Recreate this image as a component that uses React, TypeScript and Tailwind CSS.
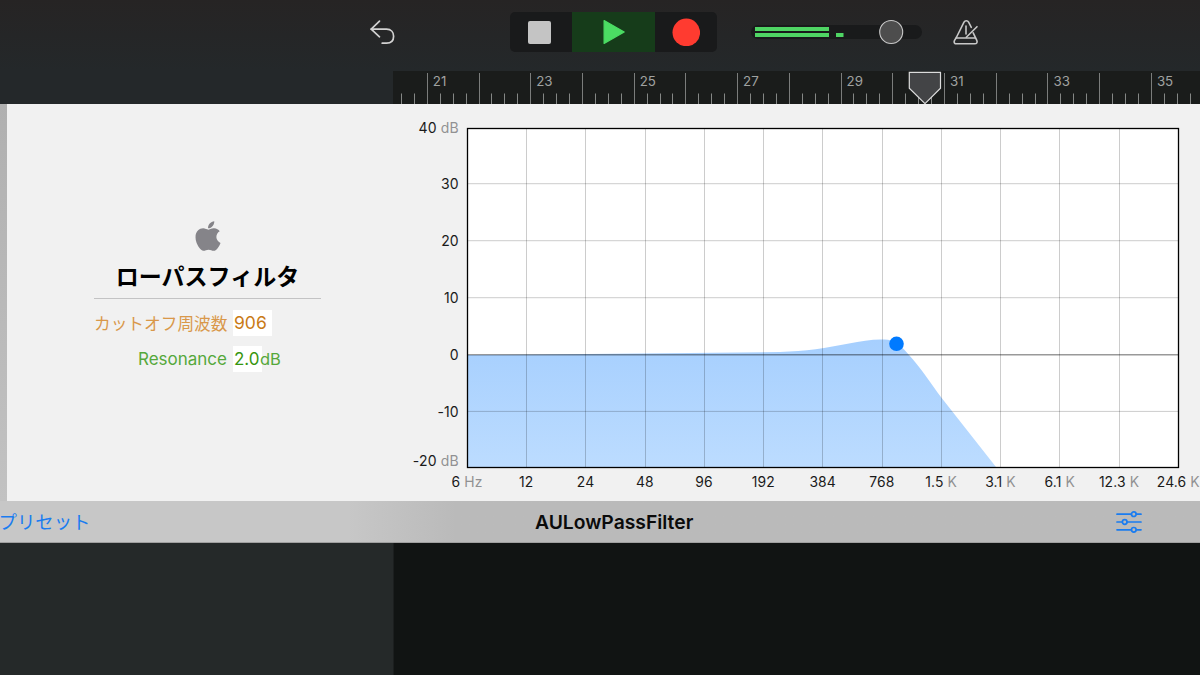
import { FaApple } from 'react-icons/fa'

const BAR_WIDTH = 51.72
const FIRST_BAR_X = 34.3

const FREQS = [
  { value: '6', unit: 'Hz' },
  { value: '12' },
  { value: '24' },
  { value: '48' },
  { value: '96' },
  { value: '192' },
  { value: '384' },
  { value: '768' },
  { value: '1.5', unit: 'K' },
  { value: '3.1', unit: 'K' },
  { value: '6.1', unit: 'K' },
  { value: '12.3', unit: 'K' },
  { value: '24.6', unit: 'K' },
]

const GAINS = [
  { value: '40', unit: 'dB', y: 23 },
  { value: '30', y: 79 },
  { value: '20', y: 136 },
  { value: '10', y: 193 },
  { value: '0', y: 250 },
  { value: '-10', y: 307 },
  { value: '-20', unit: 'dB', y: 356.6 },
]

const CURVE =
  'M74 251 L247 249.6 L387 248 C412 247.5 434 244 456 239.6 C470 236.5 484 234.5 495 235.8 C503 237 509 243 516 251 C528 264 538 280 548.5 293.8 L603 363'

function Header() {
  return (
    <header className="flex h-[71px] items-center bg-linear-to-b from-[#262424] via-[#252627] to-[#24282a] pb-[7px] pl-[369px]">
      <svg width="28" height="28" viewBox="0 0 28 28" fill="none" stroke="#d2d2d2" strokeWidth="1.7" strokeLinecap="round" strokeLinejoin="round">
        <path d="M10.5 3.2 L2.2 11.2 L10.5 18.8" />
        <path d="M2.2 11.2 H17.5 C22.2 11.2 24.6 14.4 24.6 18.3 C24.6 22.3 22.2 25.2 17.5 25.2 H13.2" />
      </svg>

      <div className="ml-[113px] flex h-10 w-[207px] overflow-hidden rounded-[5px] bg-[#191a1b]">
        <button className="flex w-[62px] items-center justify-center pr-[3px]">
          <span className="size-[23px] rounded-xs bg-[#c4c4c4]" />
        </button>
        <button className="flex w-[83px] items-center justify-center bg-[#163c1a]">
          <svg width="24" height="26" viewBox="0 0 24 26">
            <path d="M2.1 1.6 L22.2 13 L2.1 24.4 Z" fill="#4bdc63" stroke="#4bdc63" strokeWidth="1.2" strokeLinejoin="round" />
          </svg>
        </button>
        <button className="flex w-[62px] items-center justify-center">
          <svg width="28" height="28" viewBox="0 0 28 28">
            <circle cx="14.3" cy="14.4" r="13.8" fill="#ff3b30" />
          </svg>
        </button>
      </div>

      <svg className="ml-[34px]" width="172" height="28" viewBox="0 0 172 28">
        <rect x="0" y="7" width="171" height="14" rx="7" fill="#191a1b" />
        <rect x="4" y="9" width="74" height="4" fill="#4fd564" />
        <rect x="4" y="15" width="74" height="4" fill="#4fd564" />
        <rect x="85" y="15" width="7.5" height="4" fill="#4fd564" />
        <circle cx="140.2" cy="14" r="11.5" fill="#4d4d4d" stroke="#c8c8c8" strokeWidth="1.1" />
      </svg>

      <svg className="ml-[29px]" width="28" height="28" viewBox="0 0 28 28" fill="none" stroke="#c8c8c8" strokeWidth="1.6" strokeLinecap="round" strokeLinejoin="round">
        <path d="M19.3 9.4 L16.6 4.2 C15.6 2.3 13 2.3 12 4.2 L4.6 19 L2.4 22.6 C1.6 24.5 2.6 25.8 4.6 25.8 H22.6 C24.8 25.8 25.6 24.3 24.8 22.4 L21.2 14.8" />
        <path d="M4.4 20 H23.4" />
        <path d="M14 8 V16" />
        <path d="M14.3 19.3 L25 8.7" />
      </svg>
    </header>
  )
}

function Ruler() {
  const ticks = Array.from({ length: 62 }, (_, i) => i - 2)
  const labels = [21, 23, 25, 27, 29, 31, 33, 35]

  return (
    <div className="flex h-[33px] bg-[#24282a] pl-[393px]">
      <svg width="807" height="33" viewBox="0 0 807 33" className="bg-[#1a1c1b]">
        {ticks.map(i => (
          <rect
            key={i}
            x={Math.round(FIRST_BAR_X + (i * BAR_WIDTH) / 4 - 0.5)}
            y={i % 4 === 0 ? 2 : 22.5}
            width="1"
            height={i % 4 === 0 ? 31 : 10.5}
            fill={i % 4 === 0 ? '#7b7d7c' : '#858786'}
          />
        ))}
        {labels.map((n, i) => (
          <text key={n} x={FIRST_BAR_X + 5.5 + i * 2 * BAR_WIDTH} y="15.2" fontSize="13.3" fill="#a0a2a1">
            {n}
          </text>
        ))}
        {/* playhead */}
        <path d="M516.3 1.4 H547.5 V17.3 L532 32.6 L516.3 17.3 Z" fill="#434446" stroke="#dcdcdc" strokeWidth="1.2" />
      </svg>
    </div>
  )
}

function Info() {
  return (
    <section className="flex w-[386px] flex-col pl-[87px]">
      <div className="flex w-[227px] flex-col items-center border-b border-[#c3c3c4] pt-[115px]">
        <FaApple size={34} className="text-[#858489]" />
        <h1 className="mt-[9px] h-[36px] text-[23px] leading-[31px] font-bold whitespace-nowrap text-black">ローパスフィルタ</h1>
      </div>
      <div className="mt-[11px] flex h-[26px] items-center">
        <span className="w-[133px] pt-[3px] text-right text-[16.7px] whitespace-nowrap text-[#d9984a]">カットオフ周波数</span>
        <span className="ml-[6px] flex h-[26px] w-[39px] items-center bg-white pt-px pl-px text-[17.5px] text-[#c97a16]">906</span>
      </div>
      <div className="mt-[10px] flex h-[26px] items-center">
        <span className="w-[133px] pt-px text-right text-[17px] text-[#55a83b]">Resonance</span>
        <span className="ml-[6px] flex h-[26px] w-[29px] items-center bg-white pt-px pl-px text-[17px] text-[#37960f]">2.0</span>
        <span className="-ml-[2px] pt-px text-[16.5px] text-[#55a83b]">dB</span>
      </div>
    </section>
  )
}

function Graph() {
  return (
    <svg width="807" height="397" viewBox="0 0 807 397">
      <defs>
        <linearGradient id="response" x1="0" y1="0" x2="0" y2="1">
          <stop offset="0" stopColor="#a6cffe" />
          <stop offset="1" stopColor="#bcdcff" />
        </linearGradient>
      </defs>

      <rect x="74" y="24" width="712" height="340" fill="#fff" />
      <path d={`${CURVE} H74 Z`} fill="url(#response)" />

      {FREQS.slice(1, -1).map((f, i) => (
        <rect key={f.value} x={Math.round(74.3 + (i + 1) * 59.27 - 0.6)} y="25" width="1" height="338" fill="#000" opacity="0.2" />
      ))}
      {[79.2, 136.2, 193.2, 306.9].map(y => (
        <rect key={y} x="75" y={y} width="710" height="1" fill="#000" opacity="0.2" />
      ))}
      <rect x="75" y="250" width="710" height="1.5" fill="#000" opacity="0.4" />
      <rect x="74.5" y="24.5" width="711" height="339" fill="none" stroke="#000" strokeWidth="1.3" />
      <circle cx="503.5" cy="239.8" r="7.3" fill="#007aff" />

      {GAINS.map(g => (
        <text key={g.value} x="65.8" y={g.y + 5.6} textAnchor="end" fontSize="14" letterSpacing="0.15" fill="#1a1a1a">
          {g.value}
          {g.unit && <tspan fill="#919193"> {g.unit}</tspan>}
        </text>
      ))}
      {FREQS.map((f, i) => (
        <text key={f.value} x={74 + i * 59.27} y="382.6" textAnchor="middle" fontSize="13.9" letterSpacing="0.1" fill="#1a1a1a">
          {f.value}
          {f.unit && <tspan fill="#919193"> {f.unit}</tspan>}
        </text>
      ))}
    </svg>
  )
}

function TitleBar() {
  return (
    <div className="flex h-[42px] items-center border-b border-[#a0a0a0] bg-linear-to-r from-[#c7c7c7] from-29% to-[#bababa] to-38%">
      <button className="-ml-[1.5px] w-[536.5px] pt-[2px] text-left text-[18.4px] text-[#1a7cf0]">プリセット</button>
      <h2 className="w-[160px] pt-px text-[19.3px] font-semibold whitespace-nowrap text-[#0b0b0b]">AULowPassFilter</h2>
      <svg className="ml-[420px]" width="28" height="24" viewBox="0 0 28 24" stroke="#1a7cf0" strokeWidth="1.7" strokeLinecap="round" fill="#bababa">
        <path d="M2 4.2 H26 M2 12 H26 M2 19.8 H26" />
        <circle cx="18.8" cy="4.2" r="2.3" />
        <circle cx="9.7" cy="12" r="2.3" />
        <circle cx="18.8" cy="19.8" r="2.3" />
      </svg>
    </div>
  )
}

export default function App() {
  return (
    <div className="flex h-[675px] w-[1200px] flex-col overflow-hidden bg-[#111413] font-['Inter','Noto_Sans_CJK_JP',sans-serif]">
      <Header />
      <Ruler />
      <main className="flex h-[397px] bg-[#f1f1f1]">
        <div className="w-[7px] bg-linear-to-b from-[#b0b0b0] to-[#c2c2c2]" />
        <Info />
        <Graph />
      </main>
      <TitleBar />
      <div className="w-[394px] flex-1 border-r border-[#1c1f1f] bg-[#252929]" />
    </div>
  )
}
